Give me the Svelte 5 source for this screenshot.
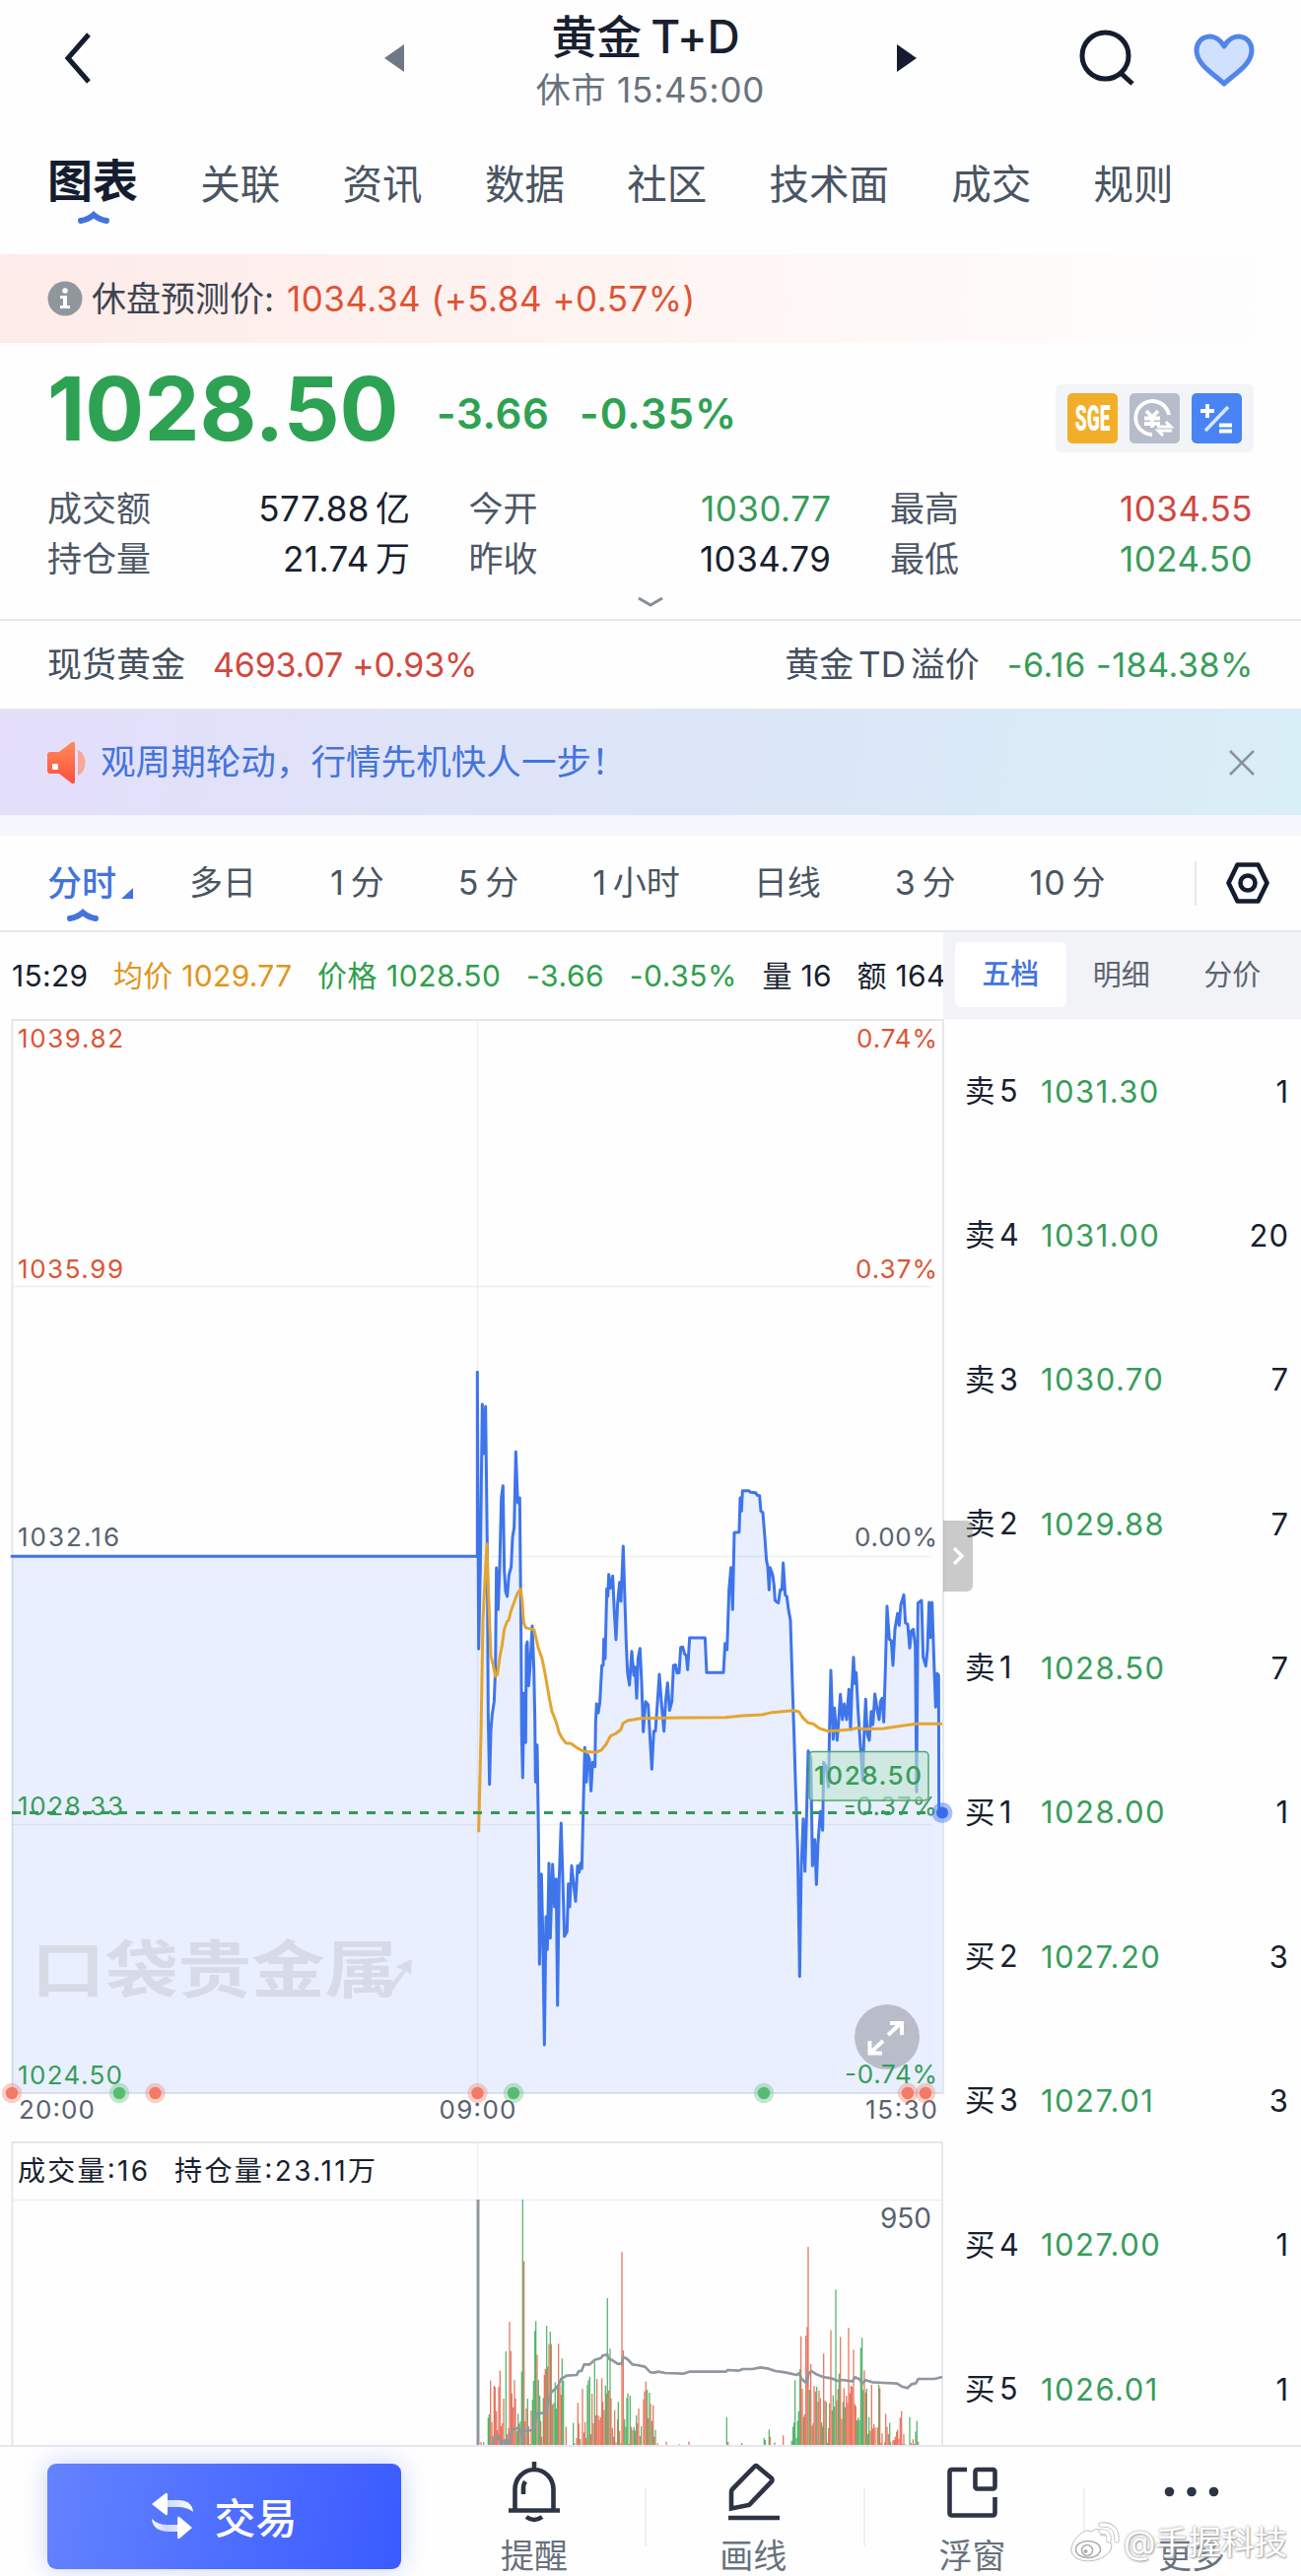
<script>
  const tabs = ['图表', '关联', '资讯', '数据', '社区', '技术面', '成交', '规则'];
  const periods = [['', '多日'], ['1', '分'], ['5', '分'], ['1', '小时'], ['', '日线'], ['3', '分'], ['10', '分']];
  const stats = [
    { label: '成交额', value: '577.88', unit: '亿', tone: '' },
    { label: '今开', value: '1030.77', unit: '', tone: 'green' },
    { label: '最高', value: '1034.55', unit: '', tone: 'red' },
    { label: '持仓量', value: '21.74', unit: '万', tone: '' },
    { label: '昨收', value: '1034.79', unit: '', tone: '' },
    { label: '最低', value: '1024.50', unit: '', tone: 'green' },
  ];
  const book = [
    ['卖', 5, '1031.30', 1], ['卖', 4, '1031.00', 20], ['卖', 3, '1030.70', 7],
    ['卖', 2, '1029.88', 7], ['卖', 1, '1028.50', 7], ['买', 1, '1028.00', 1],
    ['买', 2, '1027.20', 3], ['买', 3, '1027.01', 3], ['买', 4, '1027.00', 1],
    ['买', 5, '1026.01', 1],
  ];

  // Intraday series, three units to a pixel.
  const price = '-1344,658 73,658 73,97 77,940 82,690 88,195 92,345 98,202 103,620 106,1140 110,1352 114,1190 118,1140 124,1100 128,1000 131,693 136,820 141,690 146,480 151,443 155,700 159,765 164,780 169,715 176,690 180,600 185,570 190,340 196,495 202,480 206,900 208,1200 211,1332 215,1075 220,1225 222,930 225,918 229,1052 233,1000 240,870 245,1000 248,1150 250,1345 255,1232 259,1500 262,1900 268,1625 272,1800 277,2145 282,1755 286,1855 291,1592 295,1820 302,1595 308,1725 313,1640 317,2025 322,1640 328,1470 333,1640 338,1815 346,1800 350,1655 354,1725 360,1600 372,1708 378,1600 383,1620 387,1592 391,1608 394,1480 400,1240 405,1345 409,1262 414,1275 419,1372 424,1285 431,1298 433,1160 436,1107 441,1135 446,1100 452,990 456,990 458,910 462,970 467,757 470,780 473,713 478,755 485,718 490,830 495,912 500,800 506,737 510,795 517,627 521,760 526,920 530,1010 536,1050 543,947 549,1020 553,995 558,1090 562,970 568,938 573,1040 578,1192 585,1100 593,1110 598,1200 604,1306 610,1190 615,1190 620,1120 627,1017 633,1100 641,1190 646,1100 652,1043 658,1127 665,1100 670,990 676,988 681,1013 687,1012 692,935 698,934 704,955 709,960 713,1003 719,906 766,906 771,1012 822,1012 827,923 833,942 839,760 845,692 850,820 855,586 870,584 873,480 877,520 880,458 900,458 904,463 920,464 925,472 932,473 936,520 942,525 948,600 953,670 957,690 961,760 964,692 972,715 976,745 979,792 989,800 995,760 1000,760 1004,678 1010,775 1015,780 1020,820 1026,853 1032,1050 1037,1200 1042,1370 1048,1550 1054,1937 1059,1600 1065,1457 1070,1617 1075,1450 1080,1250 1088,1270 1093,1600 1100,1520 1105,1657 1110,1530 1117,1435 1124,1492 1127,1285 1135,1300 1142,1360 1145,1180 1149,1005 1156,1215 1160,1120 1168,1218 1172,1170 1178,1078 1184,1155 1190,1107 1197,1155 1204,1063 1209,1185 1213,1063 1218,965 1222,1045 1226,1012 1232,1130 1240,1250 1246,1340 1250,1200 1255,1093 1260,1200 1266,1218 1272,1130 1277,1170 1283,1077 1290,1125 1296,1155 1300,1100 1305,1090 1310,1162 1315,1000 1320,810 1327,910 1333,915 1338,990 1344,880 1352,832 1357,868 1362,805 1371,775 1376,860 1383,865 1389,937 1394,885 1400,880 1406,930 1410,1375 1414,800 1425,792 1430,965 1438,992 1443,940 1448,798 1452,905 1457,798 1463,980 1468,1117 1473,1015 1477,1020 1478,1420 1488,1440';
  const average = '77,1498 84,1200 90,850 102,620 108,800 114,960 120,985 128,1023 134,1018 142,960 148,930 155,880 163,857 168,853 175,825 184,800 195,770 205,757 210,800 214,860 220,875 230,878 246,882 258,935 270,970 280,1020 292,1090 300,1130 312,1160 322,1195 330,1210 342,1226 358,1228 375,1240 395,1251 432,1255 450,1248 465,1230 478,1205 495,1197 510,1185 516,1167 530,1158 570,1151 700,1149 830,1148 880,1143 940,1140 970,1133 1035,1127 1052,1131 1062,1147 1080,1165 1095,1168 1115,1182 1140,1190 1175,1188 1210,1185 1232,1180 1245,1184 1310,1182 1370,1173 1410,1168 1488,1168';
  const interest = '118,962 128,937 136,935 145,962 150,950 157,960 165,948 170,962 175,925 182,915 195,912 205,918 210,950 215,920 245,918 250,890 255,867 282,865 288,835 298,802 310,793 320,780 328,762 345,752 375,750 382,738 390,738 398,718 415,718 430,704 450,698 455,690 462,690 468,686 472,700 485,706 500,716 512,716 517,695 530,702 545,718 560,720 583,725 600,742 610,743 625,740 645,744 700,746 718,740 830,740 835,735 870,737 880,732 910,732 935,727 960,731 980,738 1010,742 1045,750 1052,745 1060,762 1075,775 1082,745 1090,738 1105,748 1125,756 1150,760 1170,768 1185,765 1215,770 1222,757 1235,762 1245,775 1255,766 1275,772 1310,774 1350,776 1365,785 1382,790 1395,778 1408,775 1415,762 1465,762 1488,756';

  // Volume bars: r = up, g = down, followed by position and bar top.
  const bars = `r84,954 g92,954 g106,880 g109,870 r113,767 r117,893 r120,935 r124,783 r127,787 r131,860 r134,918 r138,786 r142,737 r145,906 r149,897 r153,822 r157,945 g160,678 r164,930 r168,912 r171,588 r175,677 r178,806 r182,848 r186,766 r189,822 g193,920 g197,868 r200,898 g204,891 g208,740 g211,216 r215,404 r218,891 r222,852 g226,822 r229,906 r233,960 r237,858 g241,826 g244,768 g248,616 g251,586 r255,688 g259,766 g263,813 r266,890 r269,938 g274,820 r277,750 r280,732 g284,600 r287,725 r291,655 g295,618 r298,656 r302,840 g306,835 g310,772 g313,852 g317,785 r320,655 r324,780 r328,810 g331,700 g335,768 r343,908 g365,896 g368,958 r375,942 r379,835 r382,898 g386,945 r393,792 r397,925 r401,893 r404,942 g408,780 g411,766 g415,755 r418,930 r422,807 r426,897 g430,710 r433,873 r437,762 r441,873 r444,887 r448,878 r452,760 r455,832 r459,857 g463,782 r466,806 g469,516 r473,797 g477,670 r480,822 r484,912 g488,938 r491,857 r495,955 r500,885 g502,832 r506,920 g510,958 r513,376 r517,675 g521,885 g525,908 g528,820 g531,806 r535,960 g538,813 r542,908 r546,918 g550,908 g553,920 g557,873 r560,897 r564,852 r568,935 g572,906 r579,824 r582,800 r586,770 g590,795 r593,882 g597,804 r600,838 g604,890 r608,842 r611,938 g615,917 r622,958 r648,953 g688,961 r717,953 g832,879 r836,953 g878,957 g946,942 g949,948 g961,916 r964,938 g978,955 r1004,934 g1030,950 g1034,908 g1037,895 g1040,766 g1044,942 g1048,890 g1051,860 g1055,732 r1058,632 r1062,792 g1066,878 r1069,870 r1073,630 r1077,604 r1080,360 g1084,795 r1088,717 g1092,905 r1095,897 r1098,783 r1102,800 g1106,786 r1110,832 r1113,797 r1117,820 g1121,894 g1124,907 r1127,685 r1131,828 g1135,832 g1139,956 r1142,912 r1145,836 r1149,614 r1153,858 g1156,812 g1160,846 g1164,490 r1167,828 r1171,793 g1174,746 r1178,634 r1182,884 g1186,832 r1189,790 g1193,848 r1196,813 r1200,835 r1203,607 r1207,805 r1210,783 r1214,786 r1218,673 r1222,838 r1225,845 g1229,888 g1232,880 g1236,887 g1240,667 g1244,637 g1247,796 r1251,736 r1255,803 g1258,792 g1262,930 g1265,878 r1269,920 r1273,780 r1276,913 r1280,900 r1284,910 r1291,910 g1295,780 r1298,790 r1302,957 r1305,928 r1313,955 r1316,868 r1320,908 r1324,930 g1328,896 g1331,955 r1338,949 r1342,948 r1345,938 r1349,923 r1352,916 r1356,944 r1360,880 r1364,860 g1367,960 r1371,930 g1375,961 g1389,878 r1393,957 r1399,946 g1403,960 g1407,922 g1411,890 r1415,953`
    .split(' ')
    .map((b) => {
      const [x, y] = b.slice(1).split(',').map(Number);
      return { up: b[0] === 'r', x, y };
    });

  const events = [
    [12, 'r'], [121, 'g'], [157.5, 'r'], [484.5, 'r'], [521, 'g'], [775, 'g'], [921, 'r'], [939, 'r'],
  ];
</script>

<div class="app">
  <header>
    <svg class="back" width="30" height="54" viewBox="0 0 30 54"><path d="M26 3 5 27 26 51" /></svg>
    <svg class="prev" width="20" height="28" viewBox="0 0 20 28"><path d="M20 0V28L0 14Z" /></svg>
    <div class="title">
      <h1>黄金 T+D</h1>
      <p>休市 15:45:00</p>
    </div>
    <svg class="next" width="20" height="28" viewBox="0 0 20 28"><path d="M0 0V28L20 14Z" /></svg>
    <svg class="search" width="60" height="60" viewBox="0 0 60 60"><circle cx="27.500" cy="27.500" r="23.500" /><path d="m43 45 12 11" /></svg>
    <svg class="heart" width="62" height="56" viewBox="0 0 62 56"><path d="M31 52C22 43 3 33 3 18 3 3 22-2 31 14 40-2 59 3 59 18 59 33 40 43 31 52Z" /></svg>
  </header>

  <nav class="tabs">
    {#each tabs as tab, i}
      <span class:active={i === 0}>
        {tab}
        {#if i === 0}<svg class="caret" width="32" height="12" viewBox="0 0 32 12"><path d="M3 9Q10 8 16 3 22 8 29 9" /></svg>{/if}
      </span>
    {/each}
  </nav>

  <section class="forecast">
    <svg width="36" height="36" viewBox="0 0 36 36"><circle cx="18" cy="18" r="17.500" /><circle class="ink" cx="18" cy="10" r="2.800" /><path class="ink" d="M13 15h7v10h3v3H13v-3h3v-7h-3z" /></svg>
    <span class="name">休盘预测价:</span><span class="value">1034.34 (+5.84 +0.57%)</span>
  </section>

  <section class="quote">
    <strong>1028.50</strong>
    <b class="diff">-3.66</b>
    <b class="rate">-0.35%</b>
    <div class="badges">
      <span class="badge sge"><i>SGE</i></span>
      <span class="badge fx">
        <svg width="51" height="51" viewBox="0 0 51 51"><path d="M40 22A17 17 0 1 0 23 42" /><path d="m17 18 6 6 6-6M15 25.500h16M15 31h16M23 24v11" /><path class="thin" d="M28 34h14l-5-5M43 38H29l5 5" /></svg>
      </span>
      <span class="badge calc">
        <svg width="51" height="51" viewBox="0 0 51 51"><path d="M9 18h14M16 11v14M28 32.500h13M28 38.500h13" /><path class="slash" d="M37 14 14 38" /></svg>
      </span>
    </div>
  </section>

  <section class="stats">
    {#each stats as s}
      <div><span>{s.label}</span><em class={s.tone}>{s.value}{#if s.unit}<i>{s.unit}</i>{/if}</em></div>
    {/each}
  </section>
  <div class="more"><svg width="28" height="12" viewBox="0 0 28 12"><path d="M2 2 14 9 26 2" /></svg></div>

  <section class="related">
    <span class="k">现货黄金</span><span class="red">4693.07 +0.93%</span>
    <span class="k push">黄金 TD 溢价</span><span class="green">-6.16 -184.38%</span>
  </section>

  <section class="notice">
    <svg width="40" height="44" viewBox="0 0 40 44">
      <defs><linearGradient id="horn" x1="0" y1="0" x2="0" y2="1"><stop offset="0" stop-color="#ff8a5c" /><stop offset="1" stop-color="#fb4f3c" /></linearGradient></defs>
      <path fill="url(#horn)" d="M3 11h9L25 1q3-1 3 2v38q0 3-3 2L12 33H3q-3 0-3-3V14q0-3 3-3Z" /><path fill="#f9a79b" d="M31 9c10 4 10 22 0 26Z" /><rect x="5" y="23" width="6" height="6" rx="1" fill="#fff" />
    </svg>
    <p>观周期轮动，行情先机快人一步！</p>
    <svg class="close" width="26" height="26" viewBox="0 0 26 26"><path d="m1 1 24 24M25 1 1 25" /></svg>
  </section>

  <nav class="periods">
    <span class="now">分时<svg class="corner" width="12" height="11" viewBox="0 0 12 11"><path d="M12 0V11H0Z" /></svg><svg class="caret" width="32" height="12" viewBox="0 0 32 12"><path d="M3 9Q10 8 16 3 22 8 29 9" /></svg></span>
    {#each periods as [count, unit]}<span>{#if count}<i>{count}</i>{/if}{unit}</span>{/each}
    <svg class="setup" width="44" height="42" viewBox="0 0 44 42"><path d="M11.500 2.500H32.500L41.500 21 32.500 39.500H11.500L2.500 21Z" /><circle cx="22" cy="21" r="7.500" /></svg>
  </nav>

  <main>
    <div class="left">
      <div class="legend">
        <span>15:29</span><span class="gold">均价 1029.77</span><span class="green2">价格 1028.50</span><span class="green2">-3.66</span><span class="green2">-0.35%</span><span>量 16</span><span>额 164</span>
      </div>
      <svg class="chart" width="967" height="1447" viewBox="0 1034 967 1447">
        <path class="grid" d="M12 1305.500H945M12 1579.500H945M12 1851.500H945M484.500 1035V2124M484.500 2174V2232M12 2232.500H956" />
        <path class="frame" d="M12.500 2481V2174H956V2481M12.500 2124V1035H957V2124Z" />
        <g transform="translate(460 1360) scale(.33333)">
          <polygon class="area" points="{price} 1488,2292 -1344,2292" />
          <polyline class="price" points={price} />
          <polyline class="average" points={average} />
        </g>
        <g class="mark">
          <text x="32" y="2021" font-size="63" textLength="372" lengthAdjust="spacingAndGlyphs">口袋贵金属</text>
          <path d="m394 2016 15-17-8-3 17-8-1 16-5-4-14 20Z" />
        </g>
        <g class="axis">
          <text class="up" x="18" y="1063" textLength="107">1039.82</text><text class="up" x="869" y="1063" textLength="82">0.74%</text>
          <text class="up" x="18" y="1297" textLength="107">1035.99</text><text class="up" x="868" y="1297" textLength="83">0.37%</text>
          <text x="18" y="1569" textLength="103">1032.16</text><text x="867" y="1569" textLength="84">0.00%</text>
          <text class="down" x="18" y="1842" textLength="107">1028.33</text><text class="down" x="856" y="1842" textLength="95">-0.37%</text>
          <text class="down" x="18" y="2115" textLength="106">1024.50</text>
          <text x="19" y="2150" textLength="77">20:00</text><text x="445.500" y="2150" textLength="78">09:00</text><text x="878" y="2150" textLength="73">15:30</text>
        </g>
        <line class="last" x1="12" y1="1839.500" x2="946" y2="1839.500" />
        <circle cx="956" cy="1839.500" r="10.500" fill="#3f74f0" opacity=".45" /><circle cx="956" cy="1839.500" r="6" fill="#356cea" />
        <rect class="tag" x="821" y="1777.500" width="121" height="49.500" rx="4" />
        <text class="tagtext" x="826" y="1811" textLength="109">1028.50</text>
        <circle cx="900" cy="2067" r="33" fill="#b9bdca" />
        <path class="expand" d="M901 2065 914.500 2052.500M903 2053h12v12M896 2071 882.500 2083.500M882.500 2071v12.500h12.500" />
        <g class="axis"><text class="down" x="857" y="2114" textLength="94">-0.74%</text></g>
        {#each events as [x, tone]}
          <g class={tone === 'r' ? 'evt hot' : 'evt cool'}><circle class="halo" cx={x} cy="2124" r="10.300" /><circle cx={x} cy="2124" r="6.200" /></g>
        {/each}

        <g class="volhead">
          <text x="18" y="2213" textLength="132">成交量:16</text><text x="177" y="2213" textLength="204">持仓量:23.11万</text>
          <text class="max" x="893" y="2261" textLength="52">950</text>
        </g>
        <g transform="translate(460 2160) scale(.33333)">
          {#each bars as b}
            <rect class={b.up ? 'bu' : 'bd'} x={b.x - 2} y={b.y} width="4" height={963 - b.y} />
          {/each}
          <polyline class="oi" points={interest} />
          <path class="open" d="M75 216V963" />
        </g>
      </svg>
    </div>
    <aside>
      <div class="seg"><span class="on">五档</span><span>明细</span><span>分价</span></div>
      <div class="book">
        {#each book as [side, level, p, qty]}
          <div><span class="lv">{side} {level}</span><span class="green">{p}</span><span class="qty">{qty}</span></div>
        {/each}
      </div>
      <div class="handle"><svg width="14" height="22" viewBox="0 0 14 22"><path d="m3 3 8 8-8 8" /></svg></div>
    </aside>
  </main>

  <footer>
    <button>
      <svg width="44" height="48" viewBox="0 0 44 48">
        <defs><linearGradient id="sw"><stop offset="0" stop-color="#fff" /><stop offset=".35" stop-color="#fff" stop-opacity=".7" /><stop offset="1" stop-color="#fff" /></linearGradient></defs>
        <path fill="#fff" d="M1 12 15 1q2-1 2 2v18q0 3-2 2ZM42 36 29 47q-2 1-2-2V27q0-3 2-2Z" /><path fill="url(#sw)" d="M17 8h10q15 0 16 12-6-5-16-5H17ZM27 40H17Q2 39 1 27q6 6 16 6h10Z" />
      </svg>交易
    </button>
    <div class="tool">
      <svg width="54" height="64" viewBox="0 0 54 64"><path d="M27 0v7M7.500 48V28a19.500 20 0 0 1 39 0v20" /><path d="M1 49.500h52" /><path d="M16 33V26q0-3 2-6" /><path d="M19 56q8 6 16 0" /></svg><span>提醒</span>
    </div>
    <div class="tool">
      <svg width="54" height="64" viewBox="0 0 54 64"><path d="M31 4.500 46 17Q47 19 46 20L23 44 5 47.500V31Q5 29 6 28L29 4.500Q30 3.500 31 4.500Z" /><path d="M2 57h52" /></svg><span>画线</span>
    </div>
    <div class="tool">
      <svg width="54" height="64" viewBox="0 0 54 64"><path d="M21 8H6Q3.500 8 3.500 10.500V52Q3.500 54.500 6 54.500H47Q49.500 54.500 49.500 52V36" /><rect x="29.500" y="8" width="20" height="19.500" rx="2" /></svg><span>浮窗</span>
    </div>
    <div class="tool">
      <svg width="54" height="64" viewBox="0 0 54 64"><g class="dots"><circle cx="4.500" cy="30.500" r="4.800" /><circle cx="27" cy="30.500" r="4.800" /><circle cx="49.500" cy="30.500" r="4.800" /></g></svg><span>更多</span>
    </div>
    <div class="credit">
      <svg width="50" height="42" viewBox="0 0 50 42"><path d="M21 9c7-5 11-2 10 4 7-1 10 2 8 6 6 3 2 12-6 16C20 42 3 39 1 29 0 20 11 7 19 8Z" fill="#fff" stroke="#bbb" /><ellipse cx="18" cy="27" rx="12.500" ry="8.500" fill="none" stroke="#aaa" stroke-width="1.500" /><circle cx="17" cy="28" r="5.500" fill="none" stroke="#aaa" stroke-width="1.500" /><circle cx="15.500" cy="29" r="2" fill="#aaa" /><g fill="none" stroke-linecap="round"><path d="M31 9q9-1 8 9M31 2q17-1 16 16" stroke="#bbb" stroke-width="5.200" /><path d="M31 9q9-1 8 9M31 2q17-1 16 16" stroke="#fff" stroke-width="3.600" /></g></svg><span>@手握科技</span>
    </div>
  </footer>
</div>

<style>
  :global(body) { background: #fff; }
  .app {
    width: 1320px; height: 2614px; overflow: hidden; background: #fefefe; color: #191f30;
    font-family: Inter, "Noto Sans CJK SC", sans-serif; font-size: 34px; line-height: 1; white-space: nowrap;
  }
  .app * { box-sizing: border-box; }
  h1, p { margin: 0; font-weight: 400; }
  i, em { font-style: normal; }
  svg { display: block; flex: none; overflow: visible; }
  .green { color: #379d5a; }
  .red { color: #d1483f; }

  header { display: flex; align-items: center; height: 118px; padding: 0 47px 0 64px; }
  header path, header circle { fill: none; stroke: #141d2f; stroke-width: 5; }
  header .prev path { fill: #6f7885; stroke: none; }
  header .next path { fill: #141d2f; stroke: none; }
  .prev { margin-left: 296px; }
  .title { flex: none; width: 500px; display: flex; flex-direction: column; align-items: center; }
  h1 { font-size: 46px; line-height: 54px; height: 54px; margin: 11px 10px 0 0; letter-spacing: -.2px; word-spacing: -3px; font-weight: 500; }
  .title p { font-size: 35px; line-height: 40px; color: #68727d; margin-top: 7px; padding-bottom: 8px; letter-spacing: .8px; }
  .search { margin-left: 164px; }
  header .heart { margin: 4px 0 0 57px; }
  header .heart path { fill: #d0e1fd; stroke: #5185ea; stroke-width: 5; stroke-linejoin: round; }

  .tabs { display: flex; gap: 63.300px; height: 140px; padding: 0 48px; align-items: center; color: #4a5563; font-size: 40.500px; }
  .tabs span { position: relative; line-height: 60px; height: 60px; }
  .tabs .active { font-size: 46px; font-weight: 700; color: #141d2f; top: -5px; }
  .caret { position: absolute; left: 50%; margin-left: -15px; bottom: -14px; }
  .caret path { fill: none; stroke: #4474db; stroke-width: 6; stroke-linecap: round; }

  .forecast { display: flex; align-items: center; height: 90px; padding-left: 48px; background: linear-gradient(90deg, #fdebe8, #fef5f3 50%, #fefefe); font-size: 35px; color: #3d4452; }
  .forecast circle { fill: #8f979c; }
  .forecast .ink { fill: #fff; }
  .forecast .name { margin: 0 13px 0 9px; }
  .forecast .value { color: #dd5435; letter-spacing: .47px; }

  .quote { display: flex; align-items: center; height: 136px; padding: 0 48px; color: #2ea253; }
  .quote strong { font-size: 89px; font-weight: 700; width: 395px; margin-top: -3px; }
  .quote b { font-size: 42px; font-weight: 600; margin-top: 8px; letter-spacing: .7px; }
  .quote .diff { width: 145px; }
  .quote .rate { letter-spacing: 1.100px; }
  .badges { margin: 17px 0 0 auto; display: flex; gap: 12px; padding: 9px 12px; border-radius: 6px; background: #f3f4f8; height: 69px; }
  .badge { display: flex; align-items: center; justify-content: center; width: 51px; height: 51px; border-radius: 5px; }
  .sge { background: #f2ae29; color: #fff; font: 900 36px Roboto, sans-serif; }
  .sge i { transform: scaleX(.53); }
  .fx { background: #b6bcca; }
  .calc { background: #4984f5; }
  .badge path { fill: none; stroke: #fff; stroke-width: 3.800; }
  .badge .thin { stroke-width: 3; }
  .badge .slash { stroke: #d7e5ff; stroke-width: 3.500; }

  .stats { display: grid; grid-template-columns: repeat(3, 368px); column-gap: 59.500px; grid-auto-rows: 51px; padding: 7px 48px 0; height: 109px; font-size: 35px; }
  .stats div { display: flex; justify-content: space-between; align-items: center; }
  .stats span { color: #4d5766; }
  .stats em { letter-spacing: .5px; }
  .stats i { margin-left: 6px; letter-spacing: 0; }
  .more { height: 37px; border-bottom: 2px solid #e6e7ea; display: flex; justify-content: center; padding-top: 12px; }
  .more path { fill: none; stroke: #868d97; stroke-width: 3; }

  .related { display: flex; align-items: center; height: 91px; padding: 0 48px; border-bottom: 2px solid #e4e8ee; font-size: 34px; }
  .related .k { color: #454f5e; margin-right: 28px; font-size: 35px; word-spacing: -5px; }
  .related .red { letter-spacing: -.2px; }
  .related .green { letter-spacing: .55px; }
  .related .push { margin-left: auto; }

  .notice { display: flex; align-items: center; height: 106px; padding: 0 47px 0 48px; background: linear-gradient(100deg, #e4defb, #dfe4f8 35%, #dbe6f7 60%, #d9eff7); color: #4474db; }
  .notice p { font-size: 35.600px; margin-left: 14px; }
  .close { margin-left: auto; }
  .close path { stroke: #8c9299; stroke-width: 2.600; }

  .periods { display: flex; align-items: center; height: 119px; border-top: 21px solid #f4f6fb; border-bottom: 2px solid #e6e7ea; padding: 0 32px 0 48px; color: #4a5563; }
  .periods span { margin-right: 75px; position: relative; font-size: 34px; }
  .periods i { margin-right: 6px; letter-spacing: .8px; }
  .periods .now { color: #4474db; font-weight: 500; font-size: 35px; display: flex; align-items: flex-end; margin-right: 57px; }
  .periods .now .caret { left: 35px; bottom: -21px; }
  .corner { margin: 0 0 2px 5px; }
  .corner path { fill: #4474db; }
  .setup path, .setup circle { fill: none; stroke: #141d2f; stroke-width: 4.600; stroke-linejoin: round; }
  .periods::after { content: ''; order: 1; width: 2px; height: 45px; background: #e3e6eb; margin: 0 30px 0 auto; }
  .periods .setup { order: 2; }

  main { display: flex; height: 1535px; }
  .left { width: 957px; flex: none; }
  .legend { display: flex; align-items: center; gap: 25.500px; height: 88px; padding-left: 12px; font-size: 30px; letter-spacing: .3px; overflow: hidden; }
  .gold { color: #e0951c; }
  .green2 { color: #2f9f4d; }
  .legend .green2 { letter-spacing: .55px; }
  .chart { font-family: Inter, "Noto Sans CJK SC", sans-serif; }
  .grid { fill: none; stroke: #eceff4; stroke-width: 1.300; }
  .frame { fill: none; stroke: #e4e7ec; stroke-width: 2; }
  .area { fill: #3c6eff; fill-opacity: .105; }
  .price { fill: none; stroke: #3f75ea; stroke-width: 9; stroke-linejoin: round; stroke-linecap: round; }
  .average { fill: none; stroke: #e3a532; stroke-width: 9; stroke-linejoin: round; }
  .mark { fill: #d7dbe7; font-weight: 700; }
  .axis { font-size: 26px; fill: #58626f; }
  .axis .up { fill: #dd5435; }
  .axis .down { fill: #379d5a; }
  .last { stroke: #2f9c57; stroke-width: 2.800; stroke-dasharray: 9 9; }
  .tag { fill: #bfe2cf; fill-opacity: .6; stroke: #4fa672; stroke-width: 1.500; }
  .tagtext { font-size: 26px; font-weight: 500; fill: #379d5a; }
  .expand { fill: none; stroke: #fff; stroke-width: 4; }
  .halo { opacity: .35; }
  .hot { fill: #f27a66; }
  .cool { fill: #58bb72; }
  .volhead { font-size: 28px; fill: #191f30; }
  .volhead .max { fill: #58626f; }
  .bu { fill: #e4553a; fill-opacity: .78; }
  .bd { fill: #2fa44c; fill-opacity: .78; }
  .oi { fill: none; stroke: #90979e; stroke-width: 8; stroke-linejoin: round; }
  .open { stroke: #90979e; stroke-width: 9; }

  aside { position: relative; flex: 1; }
  .seg { display: flex; align-items: center; height: 88px; padding-left: 12px; background: #f2f3f7; font-size: 29px; color: #5b6370; }
  .seg span { width: 112.500px; text-align: center; line-height: 66px; }
  .seg .on { background: #fff; color: #4474db; font-weight: 500; border-radius: 6px; height: 66px; margin-top: -2px; }
  .book { display: grid; grid-auto-rows: 146.350px; font-size: 31px; }
  .book div { display: grid; grid-template-columns: 77px 160px 1fr; align-items: center; padding: 0 12px 0 22px; }
  .book .lv { font-size: 30.500px; word-spacing: -4px; }
  .book .green { letter-spacing: 1.450px; }
  .qty { text-align: right; letter-spacing: 1px; }
  .handle { position: absolute; left: 0; top: 597px; width: 30px; height: 72px; background: rgba(140, 140, 140, .45); border-radius: 0 6px 6px 0; display: flex; align-items: center; justify-content: center; }
  .handle path { fill: none; stroke: #fff; stroke-width: 3.400; }

  footer { position: relative; display: flex; height: 133px; border-top: 2px solid #e6e8ec; background: #fefefe; }
  button { width: 359px; height: 107px; margin: 17px 24px 0 48px; padding: 0 0 2px; border: 0; border-radius: 9px; background: linear-gradient(100deg, #6383ff, #3a5bff); box-shadow: 0 0 26px rgba(80, 110, 255, .3); color: #fff; font: 500 42px Inter, "Noto Sans CJK SC", sans-serif; display: flex; align-items: center; justify-content: center; gap: 20px; }
  .tool { width: 222.300px; position: relative; display: flex; flex-direction: column; align-items: center; padding-top: 15px; color: #68727d; }
  .tool span { margin-top: 15px; font-size: 34px; }
  .tool + .tool::before { content: ''; position: absolute; left: 1px; top: 41px; width: 2px; height: 60px; background: #f0f1f3; }
  .tool path, .tool rect { fill: none; stroke: #2d3444; stroke-width: 4.600; }
  .dots { fill: #2d3444; }
  .credit { position: absolute; left: 1086px; top: 77px; display: flex; align-items: center; gap: 4px; color: #fff; font-size: 33.500px; text-shadow: 0 0 3px #999, 1px 1px 2px #aaa; }
</style>
